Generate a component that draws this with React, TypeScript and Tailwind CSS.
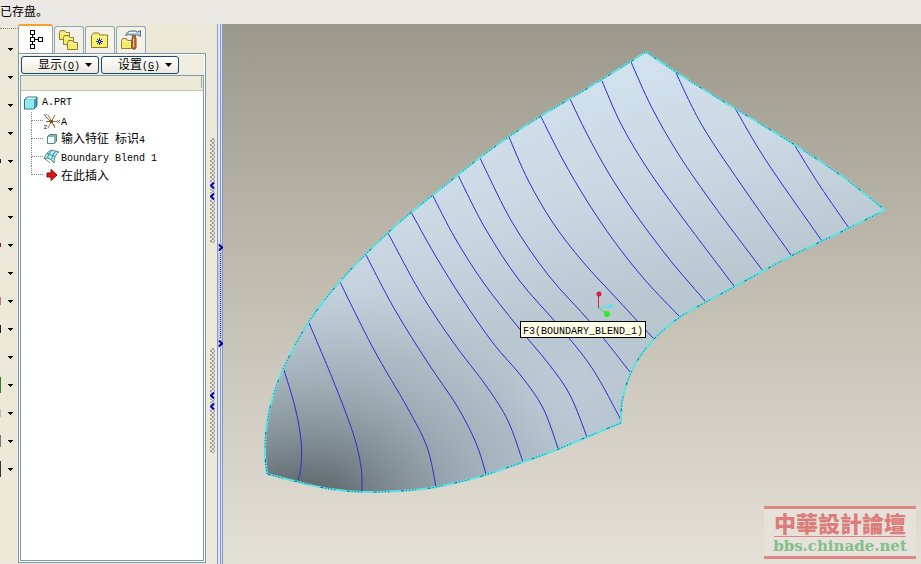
import React from 'react';

type Point = [number, number];

// Iso-lines of the blended surface, from the outer edge to the inner edge
const ISO_LINES: Point[][] = [
  [[284, 370], [295, 407], [301, 440], [301, 467], [298, 480]],
  [[309, 323], [333, 380], [353, 433], [361, 467], [362, 491]],
  [[340, 282], [373, 348], [407, 407], [427, 447], [436, 487]],
  [[366, 255], [395, 310], [428, 363], [457, 406], [476, 443], [486, 474]],
  [[388, 233], [420, 292], [453, 342], [487, 387], [508, 421], [523, 462]],
  [[411, 212], [435, 255], [463, 300], [493, 343], [522, 377], [543, 408], [558, 448]],
  [[433, 196], [455, 238], [483, 282], [518, 327], [548, 363], [570, 395], [587, 437]],
  [[458, 175], [485, 228], [519, 280], [558, 325], [592, 368], [621, 420]],
  [[480, 158], [512, 222], [549, 276], [591, 323], [630, 372]],
  [[509, 137], [528, 180], [553, 223], [583, 262], [618, 300], [654, 339]],
  [[541, 117], [563, 160], [587, 201], [614, 241], [645, 280], [680, 317]],
  [[570, 99], [587, 134], [608, 172], [634, 212], [670, 260], [706, 302]],
  [[602, 81], [621, 124], [647, 168], [682, 217], [734, 286]],
  [[631, 62], [652, 108], [679, 155], [715, 207], [763, 271]],
  [[676, 73], [703, 127], [747, 193], [791, 255]],
  [[736, 110], [767, 162], [822, 241]],
  [[795, 146], [820, 186], [849, 228]],
];

const OUTER_EDGE: Point[] = [
  [267, 474], [265, 453], [267, 423], [274, 393], [286, 363], [308, 323], [336, 286], [366, 254],
  [402, 220], [433, 195], [458, 175], [482, 156], [510, 136], [541, 116], [588, 88], [646, 52],
];
const RIGHT_EDGE: Point[] = [[646, 52], [690, 81], [736, 109], [795, 145], [843, 177], [885, 210]];
const INNER_EDGE: Point[] = [
  [885, 210], [849, 228], [820, 242], [791, 256], [763, 271], [734, 287], [706, 302], [680, 317],
  [656, 337], [639, 358], [628, 380], [622, 402], [621, 423],
];
const LOWER_EDGE: Point[] = [
  [621, 423], [587, 437], [556, 450], [523, 462], [482, 476], [436, 487], [400, 491], [362, 492],
  [330, 489], [298, 482], [267, 474],
];

// Catmull-Rom segments turned into cubic beziers
const curve = (points: Point[]) =>
  points
    .slice(1)
    .map((end, i) => {
      const start = points[i];
      const before = points[i - 1] ?? start;
      const after = points[i + 2] ?? end;
      return `C${start[0] + (end[0] - before[0]) / 6} ${start[1] + (end[1] - before[1]) / 6} ${
        end[0] - (after[0] - start[0]) / 6
      } ${end[1] - (after[1] - start[1]) / 6} ${end[0]} ${end[1]}`;
    })
    .join(' ');

const OUTLINE = `M267 474 ${curve(OUTER_EDGE)} ${curve(RIGHT_EDGE)} ${curve(INNER_EDGE)} ${curve(LOWER_EDGE)}Z`;

const Latin: React.FC<{ children: React.ReactNode }> = ({ children }) => (
  <span className="font-['Liberation_Mono',monospace] text-[10px] whitespace-pre">{children}</span>
);

const TreeTabIcon = () => (
  <svg width="14" height="20" viewBox="0 0 14 20" fill="none" stroke="#000" shapeRendering="crispEdges">
    <path d="M1.5.5h4v4h-4zM1.5 7.5h4v4h-4zM1.5 14.5h4v4h-4zM9.5 7.5h4v4h-4zM3.5 5v2M3.5 12v2M6 9.5h3" />
  </svg>
);

const FOLDER_OFFSETS: Point[] = [[0, 0], [4, 5], [8, 10]];

const FoldersIcon = () => (
  <svg width="20" height="21" viewBox="0 0 20 21" fill="none" strokeLinejoin="round">
    {FOLDER_OFFSETS.map(([x, y]) => (
      <g key={x}>
        <path d={`M${x + 0.5} ${y + 9.5}v-7l1-2h4l1.5 2h3.500v7z`} fill="#f8ea66" stroke="#8f8030" />
        <path d={`M${x + 1.5} ${y + 3.5}h8`} stroke="#fffccc" />
      </g>
    ))}
  </svg>
);

const FavoritesIcon = () => (
  <svg width="18" height="16" viewBox="0 0 18 16" fill="none">
    <path d="M.5 15.500v-12l2-2.500h5l1.500 2h7.500v12.500z" fill="#fbee6a" stroke="#8a7a28" />
    <path d="M1.5 4.5h14" stroke="#fffcc8" />
    <path d="M8.500 6v7M5 9.500h7M6 7l5 5M11 7l-5 5" stroke="#1b2f9c" />
    <path d="M8 9h1v1h-1z" fill="#fff" />
  </svg>
);

const HammerIcon = () => (
  <svg width="21" height="20" viewBox="0 0 21 20" fill="none" strokeLinejoin="round">
    <path d="M.5 18.500v-8l1-2h4l1 2h4v8z" fill="#f7e96b" stroke="#8f8030" />
    <path d="M1.500 11.500h8" stroke="#fffccc" />
    <path d="M11 9l1-4h2l1 4v9q-2 3-4 0z" fill="#d0713e" stroke="#7d4428" />
    <path d="M12.500 9v8" stroke="#f3bd98" />
    <path d="M4.500 5.500q1-4 5-4.500h5l2 1 3-1.500v6l-3-1.500h-7q-2-1-5 .5z" fill="#b3cedd" stroke="#5a7380" />
    <path d="M8 2.500h7" stroke="#f4fbff" />
  </svg>
);

const PartIcon = () => (
  <svg width="14" height="14" viewBox="0 0 14 14" strokeLinejoin="round">
    <path d="M.5 3.500l3-2.500h9.500v9l-3 3h-9.500z" fill="#4b9aa3" stroke="#2c7580" />
    <path d="M1 4h9v8.500h-9z" fill="#8feaf2" />
    <path d="M1.500 3.500l2-2h9l-2 2z" fill="#d3fbff" />
  </svg>
);

const CsysIcon = () => (
  <svg width="17" height="17" viewBox="0 0 17 17" fill="none">
    <path d="M3 8.500h11M5 2l7 13M12 2l-7 13M3 4l9 9" stroke="#a5703c" />
    <path d="M1 1l3 4M4 1l-2 2M1 12.500h3l-3 3h3M14 7l3 3M17 7l-3 3" stroke="#777096" />
    <path d="M7 7h3v3h-3z" fill="#8c4c14" />
  </svg>
);

const ImportIcon = () => (
  <svg width="12" height="12" viewBox="0 0 12 12" strokeLinejoin="round">
    <path d="M1.500 3.500l2-2h7v7l-2 2h-7z" fill="#7cb4bc" stroke="#5f8088" />
    <path d="M2 4h6v6h-6z" fill="#effdff" />
  </svg>
);

const BlendIcon = () => (
  <svg width="17" height="16" viewBox="0 0 17 16" fill="none" strokeLinejoin="round">
    <path d="M1 9.500q2-6 7-8.500l8 2q-5 3-5 11l-3-3.500q-3-2-7-1z" fill="#a6f1f5" stroke="#4b8b92" />
    <path d="M4 4.500l8 3M8.500 10.500q1-5 4-8M4.500 9q1-4 4-7.500" stroke="#4b8b92" />
    <path d="M2 10l5 4" stroke="#8a8a8a" />
  </svg>
);

const InsertIcon = () => (
  <svg width="12" height="12" viewBox="0 0 12 12">
    <path d="M1 4h4v-3.500l6 5.500-6 5.500v-3.500h-4z" fill="#e01414" stroke="#860b0b" />
  </svg>
);

const TABS = [
  { label: '模型树', icon: <TreeTabIcon /> },
  { label: '文件夹浏览器', icon: <FoldersIcon /> },
  { label: '收藏夹', icon: <FavoritesIcon /> },
  { label: '连接', icon: <HammerIcon /> },
];

const TREE = [
  { icon: <CsysIcon />, text: <Latin>A</Latin> },
  { icon: <ImportIcon />, text: <>输入特征<Latin> </Latin>标识<Latin>4</Latin></> },
  { icon: <BlendIcon />, text: <Latin>Boundary Blend 1</Latin> },
  { icon: <InsertIcon />, text: <>在此插入</> },
];

// Visible slivers of the toolbar icons that are cut by the window edge
const TOOL_EDGES = [
  'h-0', 'h-0', 'h-0', 'h-0', 'h-1 bg-[#222]', 'h-0', 'h-0', 'h-1 bg-[#8b1a1a]', 'h-0', 'h-2 bg-[#b77]', 'h-2 bg-[#222]', 'h-0', 'h-4 bg-[#2f7d32]', 'h-2 bg-[#bbb]', 'h-3 bg-[#777]', 'h-4 bg-[#333]',
];

const Toolbar = () => (
  <div className="w-[18px] shrink-0 flex flex-col pt-1">
    <div className="border-t border-dotted border-[#8c8a80] h-[7px]" />
    {TOOL_EDGES.map((edge, i) => (
      <button key={i} type="button" aria-label={`工具 ${i + 1}`} className="h-7 w-full flex items-center justify-between pr-[5px]">
        <span className={`w-px ${edge}`} />
        <svg width="5" height="3" viewBox="0 0 5 3" shapeRendering="crispEdges">
          <path d="M0 0h5v1h-1v1h-1v1h-1v-1h-1v-1h-1z" />
        </svg>
      </button>
    ))}
  </div>
);

const MenuButton: React.FC<{ label: string; hotkey: string }> = ({ label, hotkey }) => (
  <button
    type="button"
    className="w-[78px] h-[18px] flex items-center justify-end gap-[5px] pr-[6px] rounded-[3px] border border-[#1d4a73] bg-gradient-to-b from-white to-[#ece9dd] leading-4"
  >
    <span>
      {label}
      <Latin>(<u>{hotkey}</u>)</Latin>
    </span>
    <svg width="7" height="4" viewBox="0 0 7 4">
      <path d="M0 0h7l-3.500 4z" />
    </svg>
  </button>
);

const ModelTree = () => (
  <div className="w-[188px] shrink-0 flex flex-col pb-px">
    <div role="tablist" className="flex items-end gap-px h-[29px] pr-[59px]">
      {TABS.map((tab, i) => (
        <button
          key={tab.label}
          type="button"
          role="tab"
          aria-label={tab.label}
          aria-selected={i === 0}
          className={
            i === 0
              ? 'h-[29px] w-[35px] flex items-center justify-center bg-white border-x border-[#91a7b4] border-t-2 border-t-[#f5a02c] rounded-t-[3px]'
              : 'h-[27px] w-[30px] flex items-center justify-center bg-[#f3f1e8] border border-b-0 border-[#91a7b4] rounded-t-[3px]'
          }
        >
          {tab.icon}
        </button>
      ))}
    </div>
    <div className="flex-1 flex flex-col bg-white border border-[#7d97a5] p-px">
      <div className="flex gap-[2px] px-px pt-px pb-px bg-[#efece0]">
        <MenuButton label="显示" hotkey="O" />
        <MenuButton label="设置" hotkey="G" />
      </div>
      <div className="flex-1 flex flex-col border border-[#7d9fb0]">
        <div className="h-[15px] bg-[#ece9d8] border-b border-[#c5c2b2] flex justify-end pr-px">
          <div className="w-px h-3 bg-[#aaa899]" />
        </div>
        <ul className="pt-[3px] pl-[3px] leading-[18px]">
          <li>
            <div className="flex items-center gap-1 h-[18px]">
              <PartIcon />
              <Latin>A.PRT</Latin>
            </div>
            <ul className="pl-[7px]">
              {TREE.map((item, i) => (
                <li key={i} className="flex items-center h-[18px]">
                  <span className="w-3 self-stretch flex flex-col">
                    <span className="h-[9px] border-l border-b border-dotted border-[#888]" />
                    {i < TREE.length - 1 && <span className="h-[9px] border-l border-dotted border-[#888]" />}
                  </span>
                  <span className="w-[17px] mr-px flex justify-center">{item.icon}</span>
                  <span>{item.text}</span>
                </li>
              ))}
            </ul>
          </li>
        </ul>
      </div>
    </div>
  </div>
);

const Chevron: React.FC<{ right?: boolean }> = ({ right }) => (
  <svg width="5" height="7" viewBox="0 0 5 7" fill="none" stroke="#00009c" strokeWidth="2">
    <path d={right ? 'M1 .500l3 3-3 3' : 'M4 .500l-3 3 3 3'} />
  </svg>
);

const Grip = () => (
  <button
    type="button"
    aria-label="折叠面板"
    className="w-[5px] h-[105px] flex flex-col items-center justify-center gap-1 bg-[#dcd9d0] bg-[repeating-conic-gradient(#a3a19d_0_25%,#e4e2da_0_50%)] bg-[length:4px_4px]"
  >
    <span className="bg-[#d5d6ee]"><Chevron /></span>
    <span className="bg-[#d5d6ee]"><Chevron /></span>
  </button>
);

const Splitter = () => (
  <>
    <div className="w-[11px] shrink-0 flex flex-col items-center gap-[105px] pt-[114px] pl-px">
      <Grip />
      <Grip />
    </div>
    <div className="w-[6px] shrink-0 flex flex-col pt-[219px] border-x border-[#7f98c8] bg-[linear-gradient(90deg,#e3e9f7_0_2px,#7f98c8_2px_3px,#dbe3f5_3px)]">
      <button type="button" aria-label="展开面板" className="h-[105px] w-full flex flex-col items-center justify-between py-px bg-[#c5cbed]">
        <Chevron right />
        <span className="flex-1 my-[2px] border-l border-dotted border-[#30305c]" />
        <Chevron right />
      </button>
    </div>
  </>
);

const SurfaceDrawing = () => (
  <svg className="absolute inset-0 w-full h-full" viewBox="223 24 698 540" preserveAspectRatio="xMinYMin slice" fill="none">
    <defs>
      <linearGradient id="shade" gradientUnits="userSpaceOnUse" x1="500" y1="70" x2="590" y2="430">
        <stop offset="0" stopColor="#d3e3ef" />
        <stop offset=".35" stopColor="#cad9e4" />
        <stop offset=".7" stopColor="#b9c7d1" />
        <stop offset="1" stopColor="#b5c3ce" />
      </linearGradient>
      <radialGradient id="dark" gradientUnits="userSpaceOnUse" cx="0" cy="0" r="1" gradientTransform="translate(300 520) rotate(-10) scale(290 230)">
        <stop offset="0" stopColor="#4b5558" />
        <stop offset=".22" stopColor="#5f6a6e" stopOpacity=".85" />
        <stop offset=".6" stopColor="#7f8d94" stopOpacity=".42" />
        <stop offset="1" stopColor="#94a4ae" stopOpacity="0" />
      </radialGradient>
      <radialGradient id="glow" gradientUnits="userSpaceOnUse" cx="580" cy="385" r="80">
        <stop offset="0" stopColor="#c2cfdc" stopOpacity=".6" />
        <stop offset="1" stopColor="#c2cfdc" stopOpacity="0" />
      </radialGradient>
    </defs>
    <path d={OUTLINE} fill="url(#shade)" />
    <path d={OUTLINE} fill="url(#dark)" />
    <path d={OUTLINE} fill="url(#glow)" />
    {ISO_LINES.map((line, i) => (
      <path key={i} d={`M${line[0][0]} ${line[0][1]} ${curve(line)}`} stroke="#2c2cd0" />
    ))}
    <path d={OUTLINE} stroke="#5ce2e2" strokeWidth="2" />
    <path d={OUTLINE} stroke="#1c5c9c" strokeDasharray="1 2 1 2 1 2 1 2 3 12" />
    {/* spin centre */}
    <path d="M598.500 308v-13" stroke="#d0224c" />
    <path d="M599 308l12-2" stroke="#4fe0ee" />
    <path d="M599 308l7 5" stroke="#3fe03a" />
    <circle cx="599" cy="294" r="2.500" fill="#d81e48" />
    <circle cx="611" cy="306" r="2" fill="#4fe8f4" />
    <circle cx="607" cy="314" r="3" fill="#33e82c" />
  </svg>
);

const Watermark = () => (
  <div className="absolute right-[5px] bottom-[5px] w-[152px] h-[53px] flex flex-col items-center border-y-[3px] border-[#dd8683] bg-[#e6e2da]">
    <div className="h-[28px] border-b border-[#dd8683] text-[22px] leading-[26px] font-black text-[#dc7d7b] font-['Noto_Sans_CJK_TC',sans-serif] whitespace-nowrap">
      中華設計論壇
    </div>
    <div className="text-[15px] leading-[19px] font-bold text-[#80c08a] font-['DejaVu_Serif',serif]">bbs.chinade.net</div>
  </div>
);

const App: React.FC = () => {
  return (
    <div className="h-screen flex flex-col overflow-hidden bg-[#ece9d8] text-black text-[12px] font-['Noto_Sans_CJK_SC',sans-serif]">
      <header className="h-6 shrink-0 flex items-center bg-[#ebe9e3] leading-4 pb-[2px]">已存盘。</header>
      <div className="flex-1 min-h-0 flex">
        <Toolbar />
        <ModelTree />
        <Splitter />
        <main className="relative flex-1 min-w-0 overflow-hidden bg-[linear-gradient(#9c988c,#bdb8ab_42%,#d0cbc0_68%,#e3e0d5)]">
          <SurfaceDrawing />
          <div role="tooltip" className="absolute left-[297px] top-[297px] h-[17px] px-[2px] border border-black bg-[#fffee6] leading-[14px] whitespace-nowrap">
            <Latin>F3(BOUNDARY_BLEND_1)</Latin>
          </div>
          <Watermark />
        </main>
      </div>
    </div>
  );
};

export default App;
